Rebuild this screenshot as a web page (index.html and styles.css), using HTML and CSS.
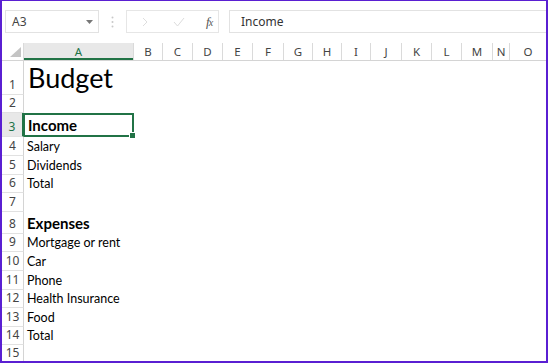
FILE: index.html
```html
<!DOCTYPE html>
<html lang="en">
<head>
    <meta charset="UTF-8">
    <title>Budget - Excel</title>
    <link rel="stylesheet" href="styles.css">
</head>
<body>
    <div class="frame">
        <div class="formula-bar">
            <div class="name-box">
                <span>A3</span>
                <svg class="caret" width="7" height="4" viewBox="0 0 7 4"><path d="M0 0h7L3.5 4z" fill="#777"/></svg>
            </div>
            <div class="grip">
                <svg width="3" height="12" viewBox="0 0 3 12"><circle cx="1.5" cy="1.5" r="1" fill="#c8c8c8"/><circle cx="1.5" cy="6" r="1" fill="#c8c8c8"/><circle cx="1.5" cy="10.5" r="1" fill="#c8c8c8"/></svg>
            </div>
            <div class="fx-buttons">
                <svg class="btn-cancel" width="8" height="10" viewBox="0 0 8 10"><path d="M2 1l4 4-4 4" stroke="#dedede" stroke-width="1" fill="none"/></svg>
                <svg class="btn-enter" width="12" height="10" viewBox="0 0 12 10"><path d="M1 5l3.5 4L11 1" stroke="#dcdcdc" stroke-width="1" fill="none"/></svg>
                <span class="fx"><i>f</i><i>x</i></span>
            </div>
            <div class="formula-input">Income</div>
        </div>

        <div class="sheet">
            <div class="col-heads">
                <div class="corner"><svg width="11" height="10" viewBox="0 0 11 10"><path d="M11 0v10H0z" fill="#c4c4c4"/></svg></div>
                <div class="ch active" style="width:110px">A</div>
                <div class="ch" style="width:29px">B</div>
                <div class="ch" style="width:30px">C</div>
                <div class="ch" style="width:30px">D</div>
                <div class="ch" style="width:30px">E</div>
                <div class="ch" style="width:31px">F</div>
                <div class="ch" style="width:29px">G</div>
                <div class="ch" style="width:29px">H</div>
                <div class="ch" style="width:29px">I</div>
                <div class="ch" style="width:31px">J</div>
                <div class="ch" style="width:30px">K</div>
                <div class="ch" style="width:30px">L</div>
                <div class="ch" style="width:31px">M</div>
                <div class="ch" style="width:17px">N</div>
                <div class="ch last">O</div>
            </div>

            <div class="row r1"><div class="rh">1</div><div class="cell title">Budget</div></div>
            <div class="row r2"><div class="rh">2</div><div class="cell"></div></div>
            <div class="row r3"><div class="rh active">3</div><div class="cell heading sel">Income</div></div>
            <div class="row r4"><div class="rh">4</div><div class="cell">Salary</div></div>
            <div class="row r5"><div class="rh">5</div><div class="cell">Dividends</div></div>
            <div class="row r6"><div class="rh">6</div><div class="cell">Total</div></div>
            <div class="row r7"><div class="rh">7</div><div class="cell"></div></div>
            <div class="row r8"><div class="rh">8</div><div class="cell heading">Expenses</div></div>
            <div class="row r9"><div class="rh">9</div><div class="cell">Mortgage or rent</div></div>
            <div class="row r10"><div class="rh">10</div><div class="cell">Car</div></div>
            <div class="row r11"><div class="rh">11</div><div class="cell">Phone</div></div>
            <div class="row r12"><div class="rh">12</div><div class="cell">Health Insurance</div></div>
            <div class="row r13"><div class="rh">13</div><div class="cell">Food</div></div>
            <div class="row r14"><div class="rh">14</div><div class="cell">Total</div></div>
            <div class="row r15"><div class="rh">15</div><div class="cell"></div></div>
        </div>
    </div>
</body>
</html>
```

FILE: styles.css
```css
body {
    margin: 0;
    padding: 0;
    background: #ffffff;
    overflow: hidden;
}
.frame {
    width: 544px;
    height: 360px;
    border: 2px solid #5a1fd2;
    border-top-width: 1px;
    background: #ffffff;
    overflow: hidden;
    display: flex;
    flex-direction: column;
}

/* formula bar */
.formula-bar {
    display: flex;
    align-items: center;
    height: 23px;
    padding: 9px 0 9px 3px;
    font-family: "Noto Sans", "Open Sans", sans-serif;
    font-size: 12px;
    color: #444;
}
.name-box {
    width: 81px;
    height: 21px;
    border: 1px solid #e2e2e2;
    display: flex;
    align-items: center;
    justify-content: space-between;
    padding: 0 5px 0 6px;
}
.grip {
    width: 27px;
    display: flex;
    justify-content: center;
}
.fx-buttons {
    width: 93px;
    height: 23px;
    box-sizing: border-box;
    border: 1px solid #e6e6e6;
    display: flex;
    align-items: center;
}
.btn-cancel {
    margin-left: 14px;
}
.btn-enter {
    margin-left: 24px;
}
.fx {
    margin-left: 21px;
    font-family: "Liberation Serif", serif;
    font-size: 13px;
    color: #555;
    letter-spacing: -1px;
}
.fx i:last-child {
    font-size: 10px;
}
.formula-input {
    flex: 1;
    margin-left: 10px;
    height: 21px;
    border: 1px solid #e2e2e2;
    border-right: none;
    display: flex;
    align-items: center;
    padding-left: 11px;
    color: #333;
}

/* sheet */
.sheet {
    flex: 1;
    margin-top: 1px;
}
.col-heads {
    display: flex;
    height: 17px;
    border-bottom: 1px solid #d4d4d4;
    font-family: "Noto Sans", "Open Sans", sans-serif;
    font-size: 11.5px;
    color: #444;
}
.corner {
    width: 22px;
    display: flex;
    align-items: flex-end;
    justify-content: flex-end;
    padding: 0 2px 3px 0;
    box-sizing: border-box;
    border-right: 1px solid #dadada;
}
.ch {
    box-sizing: border-box;
    border-right: 1px solid #dadada;
    display: flex;
    align-items: center;
    justify-content: center;
    line-height: 17px;
}
.ch.active {
    background: #e8e8e8;
    color: #217346;
    box-shadow: inset 0 -2px 0 #217346;
}
.ch.last {
    flex: 1;
    border-right: none;
}

.row {
    display: flex;
}
.r1 { height: 34px; }
.r2 { height: 18px; }
.r3 { height: 24px; }
.r4 { height: 19px; }
.r5 { height: 19px; }
.r6 { height: 18px; }
.r7 { height: 19px; }
.r8 { height: 22px; }
.r9 { height: 18px; }
.r10 { height: 19px; }
.r11 { height: 19px; }
.r12 { height: 18px; }
.r13 { height: 19px; }
.r14 { height: 18px; }
.r15 { height: 18px; }

.rh {
    width: 22px;
    box-sizing: border-box;
    border-right: 1px solid #d4d4d4;
    border-bottom: 1px solid #e1e1e1;
    display: flex;
    align-items: flex-end;
    justify-content: center;
    padding-bottom: 2px;
    font-family: "Noto Sans", "Open Sans", sans-serif;
    font-size: 12px;
    line-height: 14px;
    color: #444;
}
.rh.active {
    background: #e8e8e8;
    color: #217346;
    border-right: 2px solid #217346;
}

.cell {
    width: 110px;
    box-sizing: border-box;
    display: flex;
    align-items: flex-end;
    padding: 0 0 2px 3px;
    font-family: Lato, "Open Sans", sans-serif;
    font-size: 12.5px;
    line-height: 15px;
    color: #000;
    white-space: nowrap;
}
.cell.title {
    font-size: 27px;
    line-height: 30px;
    padding-left: 4px;
}
.cell.heading {
    font-weight: bold;
    font-size: 15px;
    line-height: 18px;
}
.cell.sel {
    position: relative;
    border: 2px solid #217346;
    border-left-width: 1px;
    padding-left: 3px;
    padding-bottom: 1px;
}
.cell.sel::after {
    content: "";
    position: absolute;
    right: -4px;
    bottom: -4px;
    width: 5px;
    height: 5px;
    background: #217346;
    border: 1px solid #ffffff;
}
```
